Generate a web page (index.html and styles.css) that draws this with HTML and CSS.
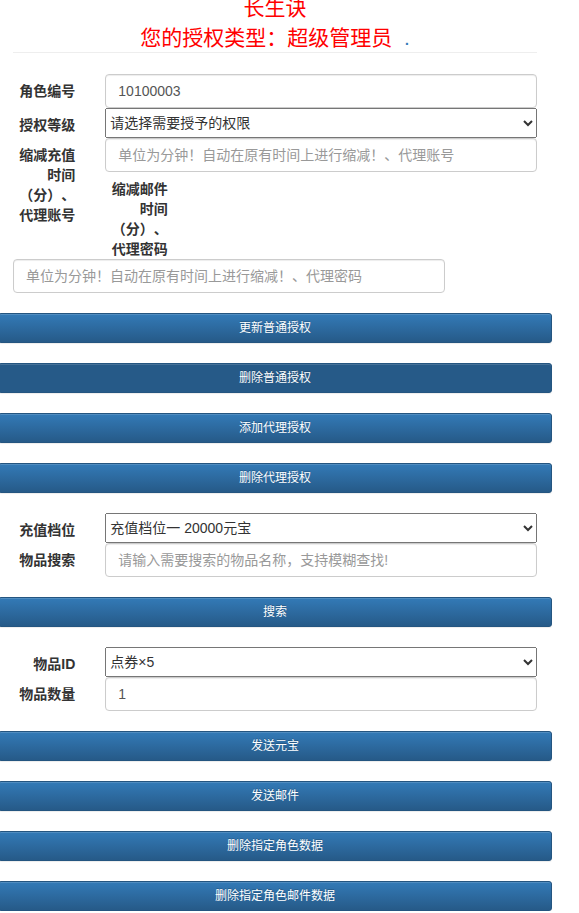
FILE: index.html
```html
<!DOCTYPE html>
<html lang="zh-CN">
<head>
<meta charset="utf-8">
<title>长生诀</title>
<link rel="stylesheet" href="styles.css">
</head>
<body>
<div class="page">
  <div class="header">
    <div class="title">长生诀</div>
    <div class="subtitle">您的授权类型：超级管理员&nbsp; <span class="dot">.</span></div>
  </div>
  <hr class="divider">
  <div class="stack">
    <div class="group">
      <div class="row">
        <label class="col-label">角色编号</label>
        <div class="col-field"><input class="control" type="text" value="10100003"></div>
      </div>
      <div class="row">
        <label class="col-label">授权等级</label>
        <div class="col-field">
          <select class="picker"><option>请选择需要授予的权限</option></select>
        </div>
      </div>
      <div class="row">
        <label class="col-label">缩减充值时间（分）、代理账号</label>
        <div class="col-field"><input class="control" type="text" placeholder="单位为分钟！自动在原有时间上进行缩减！、代理账号"></div>
        <label class="col-label">缩减邮件时间（分）、代理密码</label>
        <div class="col-field"><input class="control" type="text" placeholder="单位为分钟！自动在原有时间上进行缩减！、代理密码"></div>
      </div>
    </div>
    <button class="btn" type="button">更新普通授权</button>
    <button class="btn btn-hover" type="button">删除普通授权</button>
    <button class="btn" type="button">添加代理授权</button>
    <button class="btn" type="button">删除代理授权</button>
    <div class="group">
      <div class="row">
        <label class="col-label">充值档位</label>
        <div class="col-field">
          <select class="picker"><option>充值档位一 20000元宝</option></select>
        </div>
      </div>
      <div class="row">
        <label class="col-label">物品搜索</label>
        <div class="col-field"><input class="control" type="text" placeholder="请输入需要搜索的物品名称，支持模糊查找!"></div>
      </div>
    </div>
    <button class="btn" type="button">搜索</button>
    <div class="group">
      <div class="row">
        <label class="col-label">物品ID</label>
        <div class="col-field">
          <select class="picker"><option>点券×5</option></select>
        </div>
      </div>
      <div class="row">
        <label class="col-label">物品数量</label>
        <div class="col-field"><input class="control" type="text" value="1"></div>
      </div>
    </div>
    <button class="btn" type="button">发送元宝</button>
    <button class="btn" type="button">发送邮件</button>
    <button class="btn" type="button">删除指定角色数据</button>
    <button class="btn" type="button">删除指定角色邮件数据</button>
  </div>
</div>
</body>
</html>
```

FILE: styles.css
```css
* {
  box-sizing: border-box;
}

html, body {
  margin: 0;
  padding: 0;
  background: #fff;
}

body {
  font-family: "Liberation Sans", "Noto Sans CJK SC", sans-serif;
  font-size: 14px;
  line-height: 20px;
  color: #333;
  overflow: hidden;
  text-spacing-trim: space-all;
}

.page {
  width: 554px;
  margin-left: -2px;
}

.header {
  margin-top: -7px;
  text-align: center;
  color: #f00;
  font-size: 21px;
}

.title {
  line-height: 30px;
}

.subtitle {
  line-height: 29px;
}

.dot {
  color: #337ab7;
}

.divider {
  margin: 0 15px;
  border: 0;
  border-top: 1px solid #eee;
  height: 0;
}

.stack {
  margin-top: 21px;
  display: flex;
  flex-direction: column;
  gap: 20px;
}

.row::after {
  content: "";
  display: table;
  clear: both;
}

.col-label {
  float: left;
  width: 16.6667%;
  padding: 7px 15px 0;
  text-align: right;
  font-weight: bold;
  color: #333;
  line-height: 20px;
  text-spacing-trim: space-all;
}

.col-field {
  float: left;
  width: 83.3333%;
  padding: 0 15px;
}

.control {
  display: block;
  width: 100%;
  height: 34px;
  padding: 6px 12px;
  font-family: inherit;
  font-size: 14px;
  line-height: 20px;
  color: #555;
  background: #fff;
  border: 1px solid #ccc;
  border-radius: 4px;
  box-shadow: inset 0 1px 1px rgba(0, 0, 0, 0.075);
  outline: none;
  text-spacing-trim: space-all;
}

.control::placeholder {
  color: #999;
}

.picker {
  display: block;
  width: 100%;
  height: 30px;
  margin: 0;
  font-family: inherit;
  font-size: 14px;
  color: #333;
}

.btn {
  display: block;
  width: 100%;
  height: 30px;
  margin: 0;
  padding: 5px 10px;
  font-family: inherit;
  font-size: 12px;
  line-height: 18px;
  color: #fff;
  text-align: center;
  border: 1px solid #245580;
  border-radius: 3px;
  background-color: #265a88;
  background-image: linear-gradient(to bottom, #337ab7 0, #265a88 100%);
  text-shadow: 0 -1px 0 rgba(0, 0, 0, 0.2);
  box-shadow: inset 0 1px 0 rgba(255, 255, 255, 0.15), 0 1px 1px rgba(0, 0, 0, 0.075);
  cursor: pointer;
}

.btn-hover {
  background-image: none;
  background-color: #265a88;
}
```
